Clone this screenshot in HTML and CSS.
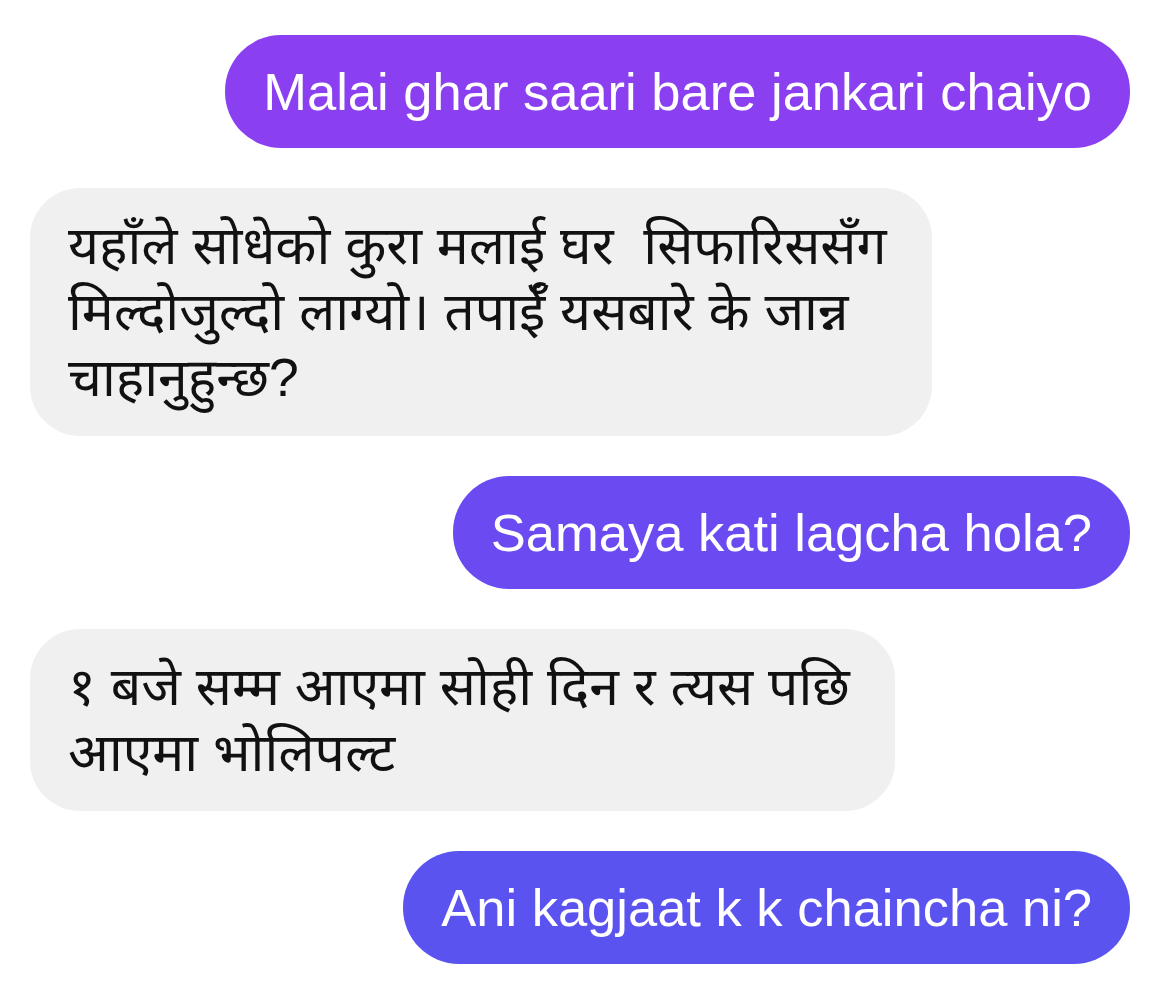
FILE: index.html
```html
<!DOCTYPE html>
<html lang="ne">
<head>
    <meta charset="UTF-8">
    <meta name="viewport" content="width=device-width, initial-scale=1.0">
    <title>Chat</title>
    <link rel="stylesheet" href="styles.css">
</head>
<body>
    <div class="chat">
        <div class="msg msg-out msg-out-1">Malai ghar saari bare jankari chaiyo</div>

        <div class="msg msg-in">यहाँले सोधेको कुरा मलाई घर&nbsp; सिफारिससँग<br>मिल्दोजुल्दो लाग्यो। तपाईँ यसबारे के जान्न<br>चाहानुहुन्छ?</div>

        <div class="msg msg-out msg-out-2">Samaya kati lagcha hola?</div>

        <div class="msg msg-in">१ बजे सम्म आएमा सोही दिन र त्यस पछि<br>आएमा भोलिपल्ट</div>

        <div class="msg msg-out msg-out-3">Ani kagjaat k k chaincha ni?</div>
    </div>
</body>
</html>
```

FILE: styles.css
```css
body {
    margin: 0;
    background: #fff;
    font-family: 'Liberation Sans', 'Noto Sans Devanagari', 'Noto Sans', sans-serif;
}
.chat {
    display: flex;
    flex-direction: column;
    gap: 40px;
    padding: 35px 26px 30px 30px;
}
.msg {
    border-radius: 56px;
}
.msg-out {
    align-self: flex-end;
    color: #fff;
    font-size: 52.5px;
    line-height: 63px;
    padding: 25px 38px;
    white-space: nowrap;
}
.msg-out-1 {
    background: #8a40f1;
}
.msg-out-2 {
    background: #6b4bf1;
}
.msg-out-3 {
    background: #5b53ef;
}
.msg-in {
    align-self: flex-start;
    background: #f0f0f0;
    color: #111;
    font-size: 53.5px;
    line-height: 66px;
    padding: 25px 45px 25px 38px;
    border-radius: 50px;
}
```
